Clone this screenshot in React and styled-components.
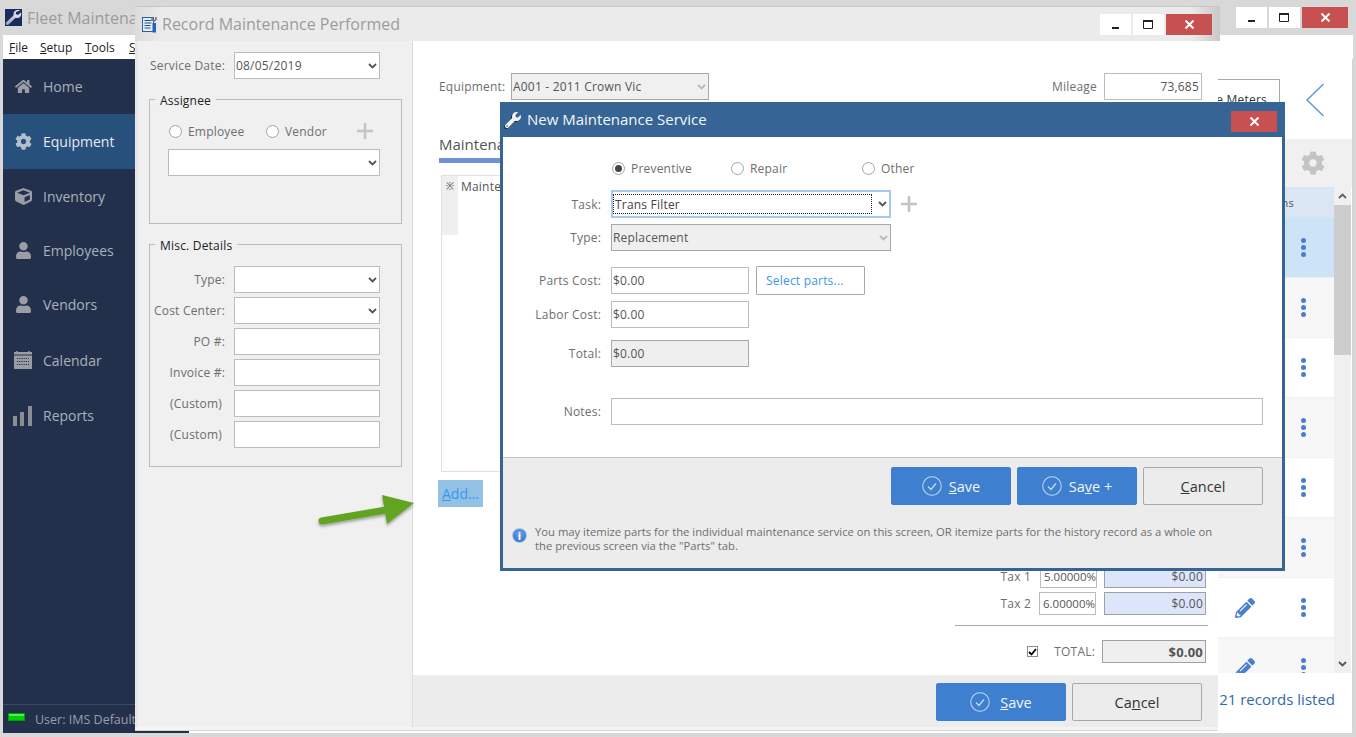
import React from "react"
import styled, { createGlobalStyle } from "styled-components"
import { FaHome, FaCog, FaCube, FaUser, FaPencilAlt, FaWrench } from "react-icons/fa"

const GlobalStyle = createGlobalStyle`
  html, body {
    margin: 0;
    padding: 0;
    background: #d8d8d8;
  }
  * {
    box-sizing: border-box;
  }
  body {
    font-family: "Open Sans", "Noto Sans", sans-serif;
    font-size: 12px;
    letter-spacing: 0.2px;
    color: #6e6e6e;
  }
`

const Desktop = styled.div`
  position: relative;
  width: 1356px;
  height: 737px;
  overflow: hidden;
  background: #d8d8d8;
`

/* main window, behind everything */
const MainWindow = styled.div`
  position: absolute;
  inset: 0;
  display: flex;
  flex-direction: column;
  padding: 0 3px 4px;
`

const MainTitle = styled.div`
  height: 35px;
  flex: none;
  display: flex;
  align-items: flex-start;
  padding: 7px 5px 0 2px;
`

const Logo = styled.svg`
  width: 17px;
  height: 17px;
  flex: none;
  margin-top: 2px;
`

const MainTitleText = styled.span`
  margin-left: 5px;
  flex: 1;
  font-size: 16px;
  line-height: 22px;
  letter-spacing: 0;
  color: #9c9c9c;
`

const WinButtons = styled.div`
  display: flex;
  gap: 2px;
  flex: none;
`

const WinButton = styled.div`
  width: ${p => (p.$close ? 46 : 31)}px;
  height: 21px;
  display: flex;
  align-items: center;
  justify-content: center;
  background: ${p => (p.$close ? "#c75050" : "#fff")};
  color: ${p => (p.$close ? "#fff" : "#222")};
`

const MenuBar = styled.div`
  height: 24px;
  flex: none;
  display: flex;
  align-items: center;
  background: #fff;
  padding-left: 6px;
  color: #222;
  font-size: 12px;
  letter-spacing: 0;
`

const MenuItem = styled.span`
  width: ${p => p.$w}px;
`

const MainBody = styled.div`
  flex: 1;
  min-height: 0;
  display: flex;
`

const Sidebar = styled.div`
  width: 186px;
  flex: none;
  display: flex;
  flex-direction: column;
  background: #22304c;
`

const NavItem = styled.div`
  height: ${p => p.$h}px;
  flex: none;
  display: flex;
  align-items: center;
  font-size: 14px;
  letter-spacing: 0;
  background: ${p => (p.$active ? "#28507c" : "transparent")};
  color: ${p => (p.$active ? "#e4ebf2" : "#a9b0bb")};
`

const NavIcon = styled.span`
  width: 40px;
  display: flex;
  justify-content: center;
  color: ${p => (p.$active ? "#b4c0cc" : "#9a9da3")};
  font-size: 17px;
`

const StatusBar = styled.div`
  margin-top: auto;
  height: 29px;
  display: flex;
  align-items: center;
  padding-left: 5px;
  border-top: 1px solid #3d4960;
  color: #9a9fa8;
  font-size: 12.5px;
  letter-spacing: 0;
`

const StatusLed = styled.span`
  width: 17px;
  height: 8px;
  margin-right: 10px;
  margin-top: -4px;
  background: #00d000;
  border: 1px solid #00a000;
  box-shadow: inset 0 2px 0 #50f050;
`

const Content = styled.div`
  flex: 1;
  display: flex;
  flex-direction: column;
  min-width: 0;
  background: #fff;
  border-right: 1px solid #d4d4d4;
`

const ContentHeader = styled.div`
  height: 80px;
  flex: none;
  display: flex;
  justify-content: flex-end;
  align-items: flex-start;
  padding: 20px 28px 0 0;
`

const MetersButton = styled.div`
  width: 160px;
  height: 40px;
  display: flex;
  align-items: center;
  justify-content: flex-end;
  padding-right: 12px;
  border: 1px solid #a8a8a8;
  color: #333;
`

const BackChevron = styled.svg`
  width: 18px;
  height: 34px;
  margin: 4px 0 0 26px;
`

const ToolStrip = styled.div`
  height: 48px;
  flex: none;
  display: flex;
  justify-content: flex-end;
  align-items: center;
  padding-right: 27px;
  background: #f0f0f0;
  color: #c4c4c4;
  font-size: 24px;
`

const TableArea = styled.div`
  flex: 1;
  min-height: 0;
  display: flex;
`

const TableBody = styled.div`
  flex: 1;
  min-width: 0;
  overflow: hidden;
`

const TableHead = styled.div`
  height: 31px;
  display: flex;
  align-items: center;
  justify-content: flex-end;
  padding-right: 40px;
  background: #dae6f3;
  color: #555;
  font-size: 11px;
`

const TableRow = styled.div`
  height: 60px;
  display: grid;
  grid-template-columns: 1fr 54px 62px;
  align-items: center;
  justify-items: center;
  background: ${p => (p.$selected ? "#cde3f7" : p.$alt ? "#f7f7f7" : "#fff")};
  border-bottom: 1px solid #f0f0f0;
  color: #4a7fd0;
  font-size: 20px;
`

const Kebab = styled.div`
  display: flex;
  flex-direction: column;
  gap: 2px;
  & > i {
    width: 5px;
    height: 5px;
    border-radius: 50%;
    background: #4a7fd0;
  }
`

const Scrollbar = styled.div`
  width: 17px;
  flex: none;
  margin-right: 1px;
  display: flex;
  flex-direction: column;
  background: #f0f0f0;
`

const ScrollEnd = styled.div`
  height: 18px;
  flex: none;
  display: flex;
  align-items: center;
  justify-content: center;
  color: #606060;
`

const ScrollThumb = styled.div`
  height: 150px;
  flex: none;
  margin-bottom: auto;
  background: #cdcdcd;
`

const ContentFooter = styled.div`
  height: 60px;
  flex: none;
  display: flex;
  align-items: center;
  justify-content: flex-end;
  padding: 0 17px 8px 0;
  color: #2f6aa8;
  font-size: 15px;
  letter-spacing: 0;
`

/* record window */
const RecordWindow = styled.div`
  position: absolute;
  left: 135px;
  top: 6px;
  width: 1085px;
  height: 725px;
  display: flex;
  flex-direction: column;
  border-top: 1px solid #c6c6c6;
`

const RecordTitle = styled.div`
  height: 34px;
  flex: none;
  display: flex;
  align-items: center;
  padding: 0 8px 0 6px;
  background: linear-gradient(90deg, #dcdcdc, #ebebeb 28px, #ebebeb calc(100% - 30px), #c8c8c8);
`

const TitleText = styled.span`
  flex: 1;
  margin: 0 0 1px 4px;
  font-size: 16px;
  letter-spacing: 0;
  color: #9c9c9c;
`

const RecordBody = styled.div`
  flex: 1;
  min-height: 0;
  display: flex;
  margin-right: 2px;
  border-bottom: 1px solid #d4d4d4;
  background: #f4f4f4;
  padding-bottom: 3px;
`

const LeftPanel = styled.div`
  width: 278px;
  flex: none;
  padding: 11px 0 0 11px;
  background: #f0f0f0;
  border-left: 3px solid #e8e8e8;
  border-right: 1px solid #dcdcdc;
`

const ServiceRow = styled.div`
  display: flex;
  align-items: center;
  height: 27px;
`

const SideLabel = styled.span`
  width: ${p => p.$w || 76}px;
  flex: none;
  text-align: right;
  margin-right: ${p => p.$gap || 9}px;
  white-space: nowrap;
`

const Field = styled.div`
  width: ${p => p.$w}px;
  height: ${p => p.$h || 27}px;
  flex: none;
  display: flex;
  align-items: center;
  margin-left: ${p => p.$left || 0}px;
  padding: 0 2px 0 1px;
  background: ${p => p.$bg || "#fff"};
  border: 1px solid ${p => p.$line || "#bcbcbc"};
  color: #555;
  white-space: nowrap;
  justify-content: ${p => (p.$right ? "flex-end" : "flex-start")};
  font-weight: ${p => (p.$bold ? 700 : 400)};
  font-size: ${p => (p.$bold ? "13px" : "12px")};
`

const RateField = styled(Field)`
  padding: 0 0 0 3px;
  font-size: 11.5px;
  letter-spacing: 0;
`

const ComboValue = styled.span`
  flex: 1;
  min-width: 0;
`

const ChevronMark = styled.svg`
  width: 9px;
  height: 6px;
  flex: none;
  opacity: ${p => (p.$faded ? 0.35 : 1)};
`

const Group = styled.div`
  position: relative;
  width: 253px;
  height: ${p => p.$h}px;
  margin-top: 20px;
  border: 1px solid #bcbcbc;
  padding: ${p => p.$pad};
`

const GroupLegend = styled.span`
  position: absolute;
  left: 5px;
  top: -7px;
  padding: 0 5px;
  line-height: 16px;
  background: #f0f0f0;
  color: #222;
`

const RadioRow = styled.div`
  display: flex;
  align-items: center;
  height: 20px;
  margin-bottom: 8px;
`

const RadioOption = styled.div`
  width: ${p => p.$w}px;
  display: flex;
  align-items: center;
  gap: 6px;
  flex: none;
`

const Radio = styled.span`
  width: 13px;
  height: 13px;
  flex: none;
  display: flex;
  align-items: center;
  justify-content: center;
  margin-left: ${p => p.$left || 0}px;
  border-radius: 50%;
  border: 1px solid #a4a4a4;
  background: #fff;
  &::after {
    content: "";
    display: ${p => (p.$checked ? "block" : "none")};
    width: 7px;
    height: 7px;
    border-radius: 50%;
    background: #444;
  }
`

const PlusMark = styled.svg`
  width: 18px;
  height: 18px;
  flex: none;
  margin-left: ${p => p.$left || 0}px;
`

const MiscRows = styled.div`
  display: flex;
  flex-direction: column;
  gap: 4px;
`

const MiscRow = styled.div`
  display: flex;
  align-items: center;
`

const RightPanel = styled.div`
  flex: 1;
  min-width: 0;
  display: flex;
  flex-direction: column;
`

const RightMain = styled.div`
  height: 634px;
  flex: none;
  padding: 32px 9px 0 26px;
  background: #fff;
`

const TopRow = styled.div`
  display: flex;
  align-items: center;
  padding-right: 7px;
`

const TopLabel = styled.span`
  margin-right: ${p => p.$gap}px;
  ${p => (p.$auto ? "margin-left: auto;" : "")}
`

const EquipmentLabel = styled(TopLabel)`
  width: 72px;
  margin-right: 0;
`

const TabHeading = styled.div`
  height: 29px;
  margin-top: 34px;
  border-bottom: 5px solid #7190d8;
  font-size: 15px;
  letter-spacing: 0;
  color: #555;
`

const GridBox = styled.div`
  height: 297px;
  margin: 12px 0 0 2px;
  display: flex;
  align-items: flex-start;
  border: 1px solid #e0e0e0;
`

const RowHeader = styled.div`
  width: 16px;
  height: 59px;
  flex: none;
  padding-top: 3px;
  text-align: center;
  background: #efefef;
  font-size: 10px;
  color: #555;
`

const GridColumn = styled.div`
  padding: 2px 0 0 3px;
  color: #555;
`

const AddLink = styled.div`
  width: 45px;
  height: 27px;
  margin: 8px 0 0 -1px;
  display: flex;
  align-items: center;
  justify-content: center;
  background: #93c1e3;
  color: #3a97f0;
  font-size: 14px;
  letter-spacing: 0;
`

const Totals = styled.div`
  margin-top: 58px;
  display: flex;
  flex-direction: column;
  align-items: flex-end;
  padding-right: 3px;
`

const TotalRow = styled.div`
  height: 23px;
  margin-top: ${p => p.$top || 0}px;
  display: flex;
  align-items: center;
`

const TaxLabel = styled.span`
  margin-right: ${p => p.$gap}px;
`

const TotalsRule = styled.div`
  width: 253px;
  height: 1px;
  margin: 10px -2px 0 0;
  background: #a8a8a8;
`

const CheckBox = styled.span`
  width: 11px;
  height: 11px;
  margin-right: 16px;
  display: flex;
  align-items: center;
  justify-content: center;
  border: 1px solid #8c8c8c;
  background: #fff;
`

const RecordFooter = styled.div`
  flex: 1;
  display: flex;
  justify-content: flex-end;
  gap: 6px;
  padding: 8px 16px 0 0;
  background: #ececec;
`

const ActionButton = styled.div`
  width: ${p => p.$w}px;
  height: 38px;
  flex: none;
  display: flex;
  align-items: center;
  justify-content: center;
  gap: ${p => p.$gap || 8}px;
  border-radius: 2px;
  font-size: 14.5px;
  letter-spacing: 0;
  background: ${p => (p.$primary ? "#3f7fcf" : "#ececec")};
  color: ${p => (p.$primary ? "#f0f5fb" : "#333")};
  border: 1px solid ${p => (p.$primary ? "#3f7fcf" : "#a8a8a8")};
`

const CheckCircle = styled.svg`
  width: 20px;
  height: 20px;
  flex: none;
`

/* the dialog on top */
const Modal = styled.div`
  position: absolute;
  left: 500px;
  top: 102px;
  width: 785px;
  height: 469px;
  display: flex;
  flex-direction: column;
  border: 3px solid #366494;
  background: #fff;
`

const ModalTitle = styled.div`
  height: 32px;
  flex: none;
  display: flex;
  align-items: center;
  padding: 0 5px 0 2px;
  background: #366494;
  color: #f4f7fa;
  font-size: 15px;
  letter-spacing: 0;
`

const ModalIcon = styled(FaWrench)`
  width: 16px;
  height: 16px;
  margin-bottom: 3px;
  filter: drop-shadow(-1px 1px 0 #1a2a3a);
`

const ModalTitleText = styled.span`
  flex: 1;
  margin: 0 0 5px 6px;
`

const ModalBody = styled.div`
  height: 320px;
  flex: none;
  padding-top: 23px;
`

const ModalRow = styled.div`
  display: flex;
  align-items: center;
  margin-top: ${p => p.$top || 0}px;
`

const ModalLabel = styled.span`
  width: 98px;
  flex: none;
  margin-right: 10px;
  text-align: right;
`

const FocusField = styled.div`
  width: 280px;
  height: 28px;
  flex: none;
  display: flex;
  align-items: center;
  padding: 2px 2px 2px 0;
  border: 2px solid #a6c8ea;
  background: #fff;
  color: #444;
`

const FocusValue = styled.span`
  flex: 1;
  height: 100%;
  display: flex;
  align-items: center;
  padding-left: 1px;
  margin-right: 6px;
  border: 1px dotted #222;
`

const SelectParts = styled.div`
  width: 109px;
  height: 29px;
  flex: none;
  margin-left: 7px;
  display: flex;
  align-items: center;
  padding-left: 9px;
  border: 1px solid #a8a8a8;
  border-radius: 1px;
  color: #3a97f0;
`

const ModalFooter = styled.div`
  flex: 1;
  border-top: 1px solid #c4c4c4;
  background: #ececec;
`

const ModalButtons = styled.div`
  display: flex;
  justify-content: flex-end;
  gap: 6px;
  padding: 9px 19px 0 0;
`

const InfoNote = styled.div`
  display: flex;
  gap: 8px;
  padding: 20px 0 0 9px;
`

const InfoIcon = styled.span`
  width: 15px;
  height: 15px;
  flex: none;
  margin-top: 3px;
  border-radius: 50%;
  display: flex;
  align-items: center;
  justify-content: center;
  background: radial-gradient(circle at 50% 35%, #6fa6e8, #2468c4);
  border: 1px solid #a9c6ea;
  color: #fff;
  font-size: 11px;
  font-weight: 700;
  line-height: 1;
`

const InfoText = styled.div`
  width: 690px;
  font-size: 11.25px;
  line-height: 14px;
  letter-spacing: 0;
`

const ArrowMark = styled.svg`
  position: absolute;
  left: 312px;
  top: 490px;
  width: 108px;
  height: 44px;
`

const Chevron = ({ faded }) => (
  <ChevronMark viewBox="0 0 9 6" $faded={faded}>
    <path d="M1 1l3.5 3.5L8 1" fill="none" stroke="#555" strokeWidth="1.8" />
  </ChevronMark>
)

const Plus = ({ left }) => (
  <PlusMark viewBox="0 0 18 18" $left={left}>
    <path d="M9 1v16M1 9h16" stroke="#c4c4c4" strokeWidth="2.6" />
  </PlusMark>
)

const Combo = ({ w, value, line, bg, faded }) => (
  <Field $w={w} $line={line} $bg={bg}>
    <ComboValue>{value}</ComboValue>
    <Chevron faded={faded} />
  </Field>
)

const CircleCheck = () => (
  <CheckCircle viewBox="0 0 20 20">
    <circle cx="10" cy="10" r="9.300" fill="none" stroke="#a9c6ea" strokeWidth="1.300" />
    <path d="M6 10.500l3 3 5-6" fill="none" stroke="#c8daf0" strokeWidth="1.200" />
  </CheckCircle>
)

const MinGlyph = () => (
  <svg width="11" height="11" viewBox="0 0 11 11">
    <rect x="2" y="8" width="7" height="2" fill="#222" />
  </svg>
)

const MaxGlyph = () => (
  <svg width="11" height="11" viewBox="0 0 11 11">
    <path d="M.5 2.500h9v7h-9z" fill="none" stroke="#222" />
    <rect x="0" y="1" width="10" height="2" fill="#222" />
  </svg>
)

const CloseGlyph = () => (
  <svg width="11" height="9" viewBox="0 0 11 9">
    <path d="M1.500 .5l8 8M9.500 .5l-8 8" stroke="#fff" strokeWidth="2" />
  </svg>
)

const CalendarGlyph = () => (
  <svg width="18" height="18" viewBox="0 0 18 18">
    <rect x="0" y="1" width="18" height="17" fill="#9a9da3" />
    <rect x="0" y="3.500" width="18" height="1" fill="#22304c" />
    <path d="M3 0v3M15 0v3" stroke="#9a9da3" strokeWidth="1.500" />
    <path d="M3 7.500h12M3 10.500h12M3 13.500h12" stroke="#22304c" strokeWidth="1.200" strokeDasharray="1.200 1" />
  </svg>
)

const BarsGlyph = () => (
  <svg width="20" height="20" viewBox="0 0 20 20">
    <rect x="0" y="10" width="4" height="10" fill="#8a8d92" />
    <rect x="7" y="6" width="4" height="14" fill="#8a8d92" />
    <rect x="15" y="0" width="4" height="20" fill="#8a8d92" />
  </svg>
)

const NAV = [
  { label: "Home", icon: <FaHome />, h: 55 },
  { label: "Equipment", icon: <FaCog />, h: 55, active: true },
  { label: "Inventory", icon: <FaCube />, h: 55 },
  { label: "Employees", icon: <FaUser />, h: 53 },
  { label: "Vendors", icon: <FaUser />, h: 55 },
  { label: "Calendar", icon: <CalendarGlyph />, h: 56 },
  { label: "Reports", icon: <BarsGlyph />, h: 55 },
]

const MISC = [
  { label: "Type:", combo: true },
  { label: "Cost Center:", combo: true },
  { label: "PO #:" },
  { label: "Invoice #:" },
  { label: "(Custom)", gap: 12 },
  { label: "(Custom)", gap: 12 },
]

const ROWS = [0, 1, 2, 3, 4, 5, 6, 7]

const App = () => (
  <Desktop>
    <GlobalStyle />

    <MainWindow>
      <MainTitle>
        <Logo viewBox="0 0 17 17">
          <defs>
            <linearGradient id="logoMetal" x1="0" y1="1" x2="1" y2="0">
              <stop offset="0" stopColor="#9aa0b0" />
              <stop offset="1" stopColor="#f4f4f4" />
            </linearGradient>
          </defs>
          <rect width="17" height="17" fill="#1c2a62" />
          <path d="M15 1.500c-3-1.200-6.500.3-6.500 3.500 0 1 .2 1.300-.8 2.200L1 13.500c-.8 1.500.8 3 2.300 2.300l6.500-6.300c.9-.8 1.400-.5 2.400-.5 2.700 0 4.600-2.500 3.800-5.500L13 6 10.800 5 11 3z" fill="url(#logoMetal)" />
        </Logo>
        <MainTitleText>Fleet Maintenance Pro</MainTitleText>
        <WinButtons>
          <WinButton><MinGlyph /></WinButton>
          <WinButton><MaxGlyph /></WinButton>
          <WinButton $close><CloseGlyph /></WinButton>
        </WinButtons>
      </MainTitle>
      <MenuBar>
        <MenuItem $w={31}><u>F</u>ile</MenuItem>
        <MenuItem $w={45}><u>S</u>etup</MenuItem>
        <MenuItem $w={44}><u>T</u>ools</MenuItem>
        <MenuItem $w={50}><u>S</u>ervice</MenuItem>
      </MenuBar>
      <MainBody>
        <Sidebar>
          {NAV.map(item => (
            <NavItem key={item.label} $active={item.active} $h={item.h}>
              <NavIcon $active={item.active}>{item.icon}</NavIcon>
              {item.label}
            </NavItem>
          ))}
          <StatusBar>
            <StatusLed />
            User: IMS Default
          </StatusBar>
        </Sidebar>
        <Content>
          <ContentHeader>
            <MetersButton>Update Meters</MetersButton>
            <BackChevron viewBox="0 0 18 34">
              <path d="M17.500 1L1 17l16.500 16" fill="none" stroke="#5f95dc" strokeWidth="1.500" />
            </BackChevron>
          </ContentHeader>
          <ToolStrip><FaCog /></ToolStrip>
          <TableArea>
            <TableBody>
              <TableHead>Actions</TableHead>
              {ROWS.map(n => (
                <TableRow key={n} $selected={n === 0} $alt={n % 2 === 1}>
                  <span />
                  <FaPencilAlt />
                  <Kebab><i /><i /><i /></Kebab>
                </TableRow>
              ))}
            </TableBody>
            <Scrollbar>
              <ScrollEnd>
                <svg width="9" height="6" viewBox="0 0 9 6"><path d="M1 5l3.500-3.500L8 5" fill="none" stroke="#606060" strokeWidth="1.800" /></svg>
              </ScrollEnd>
              <ScrollThumb />
              <ScrollEnd><Chevron /></ScrollEnd>
            </Scrollbar>
          </TableArea>
          <ContentFooter>21 records listed</ContentFooter>
        </Content>
      </MainBody>
    </MainWindow>

    <RecordWindow>
      <RecordTitle>
        <svg width="17" height="17" viewBox="0 0 17 17">
          <rect x="1.500" y="1.500" width="11" height="14" fill="#e4ecf8" stroke="#2a5ea8" />
          <path d="M3.500 4.500h7M3.500 7h7M3.500 9.500h6M3.500 12h6" stroke="#24508f" strokeWidth="1.200" />
          <rect x="11.500" y="7" width="3.500" height="9.500" fill="#1f62c0" />
          <path d="M11 1v2.500l2 1.500 2-1.500V1" fill="none" stroke="#777" strokeWidth="1.500" />
        </svg>
        <TitleText>Record Maintenance Performed</TitleText>
        <WinButtons>
          <WinButton><MinGlyph /></WinButton>
          <WinButton><MaxGlyph /></WinButton>
          <WinButton $close><CloseGlyph /></WinButton>
        </WinButtons>
      </RecordTitle>
      <RecordBody>
        <LeftPanel>
          <ServiceRow>
            <SideLabel>Service Date:</SideLabel>
            <Combo w={146} value="08/05/2019" />
          </ServiceRow>
          <Group $h={125} $pad="21px 0 0 18px">
            <GroupLegend>Assignee</GroupLegend>
            <RadioRow>
              <RadioOption $w={98}><Radio $left={1} />Employee</RadioOption>
              <RadioOption $w={90}><Radio />Vendor</RadioOption>
              <Plus />
            </RadioRow>
            <Combo w={212} />
          </Group>
          <Group $h={223} $pad="21px 0 0 4px">
            <GroupLegend>Misc. Details</GroupLegend>
            <MiscRows>
              {MISC.map((row, i) => (
                <MiscRow key={i}>
                  <SideLabel $w={row.gap ? 68 : 71} $gap={row.gap}>{row.label}</SideLabel>
                  {row.combo ? <Combo w={146} /> : <Field $w={146} />}
                </MiscRow>
              ))}
            </MiscRows>
          </Group>
        </LeftPanel>
        <RightPanel>
          <RightMain>
            <TopRow>
              <EquipmentLabel>Equipment:</EquipmentLabel>
              <Combo w={198} value="A001 - 2011 Crown Vic" line="#a8a8a8" bg="#f0f0f0" faded />
              <TopLabel $gap={7} $auto>Mileage</TopLabel>
              <Field $w={98} $right>73,685</Field>
            </TopRow>
            <TabHeading>Maintenance Services</TabHeading>
            <GridBox>
              <RowHeader>※</RowHeader>
              <GridColumn>Maintenance Service</GridColumn>
            </GridBox>
            <AddLink><span><u>A</u>dd...</span></AddLink>
            <Totals>
              <TotalRow>
                <TaxLabel $gap={9}>Tax 1</TaxLabel>
                <RateField $w={57} $h={23}>5.00000%</RateField>
                <Field $w={102} $h={23} $bg="#dde5fb" $line="#a0a0a0" $right $left={7}>$0.00</Field>
              </TotalRow>
              <TotalRow $top={4}>
                <TaxLabel $gap={8}>Tax 2</TaxLabel>
                <RateField $w={57} $h={23}>6.00000%</RateField>
                <Field $w={102} $h={23} $bg="#dde5fb" $line="#a0a0a0" $right $left={8}>$0.00</Field>
              </TotalRow>
              <TotalsRule />
              <TotalRow $top={14}>
                <CheckBox>
                  <svg width="9" height="8" viewBox="0 0 9 8"><path d="M1 4l2.500 2.500L8 1" fill="none" stroke="#000" strokeWidth="1.800" /></svg>
                </CheckBox>
                <TaxLabel $gap={7}>TOTAL:</TaxLabel>
                <Field $w={104} $h={23} $bg="#efefef" $line="#a0a0a0" $right $bold>$0.00</Field>
              </TotalRow>
            </Totals>
          </RightMain>
          <RecordFooter>
            <ActionButton $primary $w={130} $gap={10}><CircleCheck /><span><u>S</u>ave</span></ActionButton>
            <ActionButton $w={130}><span>Ca<u>n</u>cel</span></ActionButton>
          </RecordFooter>
        </RightPanel>
      </RecordBody>
    </RecordWindow>

    <ArrowMark viewBox="0 0 108 44">
      <defs>
        <filter id="arrowShadow" x="-20%" y="-20%" width="140%" height="150%">
          <feDropShadow dx="0" dy="2" stdDeviation="1.500" floodColor="#000" floodOpacity="0.35" />
        </filter>
      </defs>
      <g filter="url(#arrowShadow)">
        <path d="M10 31L74 20" stroke="#62a324" strokeWidth="7" strokeLinecap="round" />
        <path d="M70 5l32 8-27 21z" fill="#62a324" />
      </g>
    </ArrowMark>

    <Modal>
      <ModalTitle>
        <ModalIcon color="#f4f4f4" />
        <ModalTitleText>New Maintenance Service</ModalTitleText>
        <WinButton $close><CloseGlyph /></WinButton>
      </ModalTitle>
      <ModalBody>
        <ModalRow>
          <ModalLabel />
          <RadioOption $w={120}><Radio $left={1} $checked />Preventive</RadioOption>
          <RadioOption $w={131}><Radio />Repair</RadioOption>
          <RadioOption $w={80}><Radio />Other</RadioOption>
        </ModalRow>
        <ModalRow $top={13}>
          <ModalLabel>Task:</ModalLabel>
          <FocusField>
            <FocusValue>Trans Filter</FocusValue>
            <Chevron />
          </FocusField>
          <Plus left={9} />
        </ModalRow>
        <ModalRow $top={6}>
          <ModalLabel>Type:</ModalLabel>
          <Combo w={280} value="Replacement" line="#a8a8a8" bg="#efefef" faded />
        </ModalRow>
        <ModalRow $top={15}>
          <ModalLabel>Parts Cost:</ModalLabel>
          <Field $w={138}>$0.00</Field>
          <SelectParts>Select parts...</SelectParts>
        </ModalRow>
        <ModalRow $top={6}>
          <ModalLabel>Labor Cost:</ModalLabel>
          <Field $w={138}>$0.00</Field>
        </ModalRow>
        <ModalRow $top={12}>
          <ModalLabel>Total:</ModalLabel>
          <Field $w={138} $bg="#efefef" $line="#a8a8a8">$0.00</Field>
        </ModalRow>
        <ModalRow $top={31}>
          <ModalLabel>Notes:</ModalLabel>
          <Field $w={652} />
        </ModalRow>
      </ModalBody>
      <ModalFooter>
        <ModalButtons>
          <ActionButton $primary $w={120} $gap={7}><CircleCheck /><span><u>S</u>ave</span></ActionButton>
          <ActionButton $primary $w={120} $gap={7}><CircleCheck /><span>Sa<u>v</u>e +</span></ActionButton>
          <ActionButton $w={120}><span><u>C</u>ancel</span></ActionButton>
        </ModalButtons>
        <InfoNote>
          <InfoIcon>i</InfoIcon>
          <InfoText>
            You may itemize parts for the individual maintenance service on this screen, OR itemize parts for the history record as a whole on the previous screen via the "Parts" tab.
          </InfoText>
        </InfoNote>
      </ModalFooter>
    </Modal>
  </Desktop>
)

export default App
